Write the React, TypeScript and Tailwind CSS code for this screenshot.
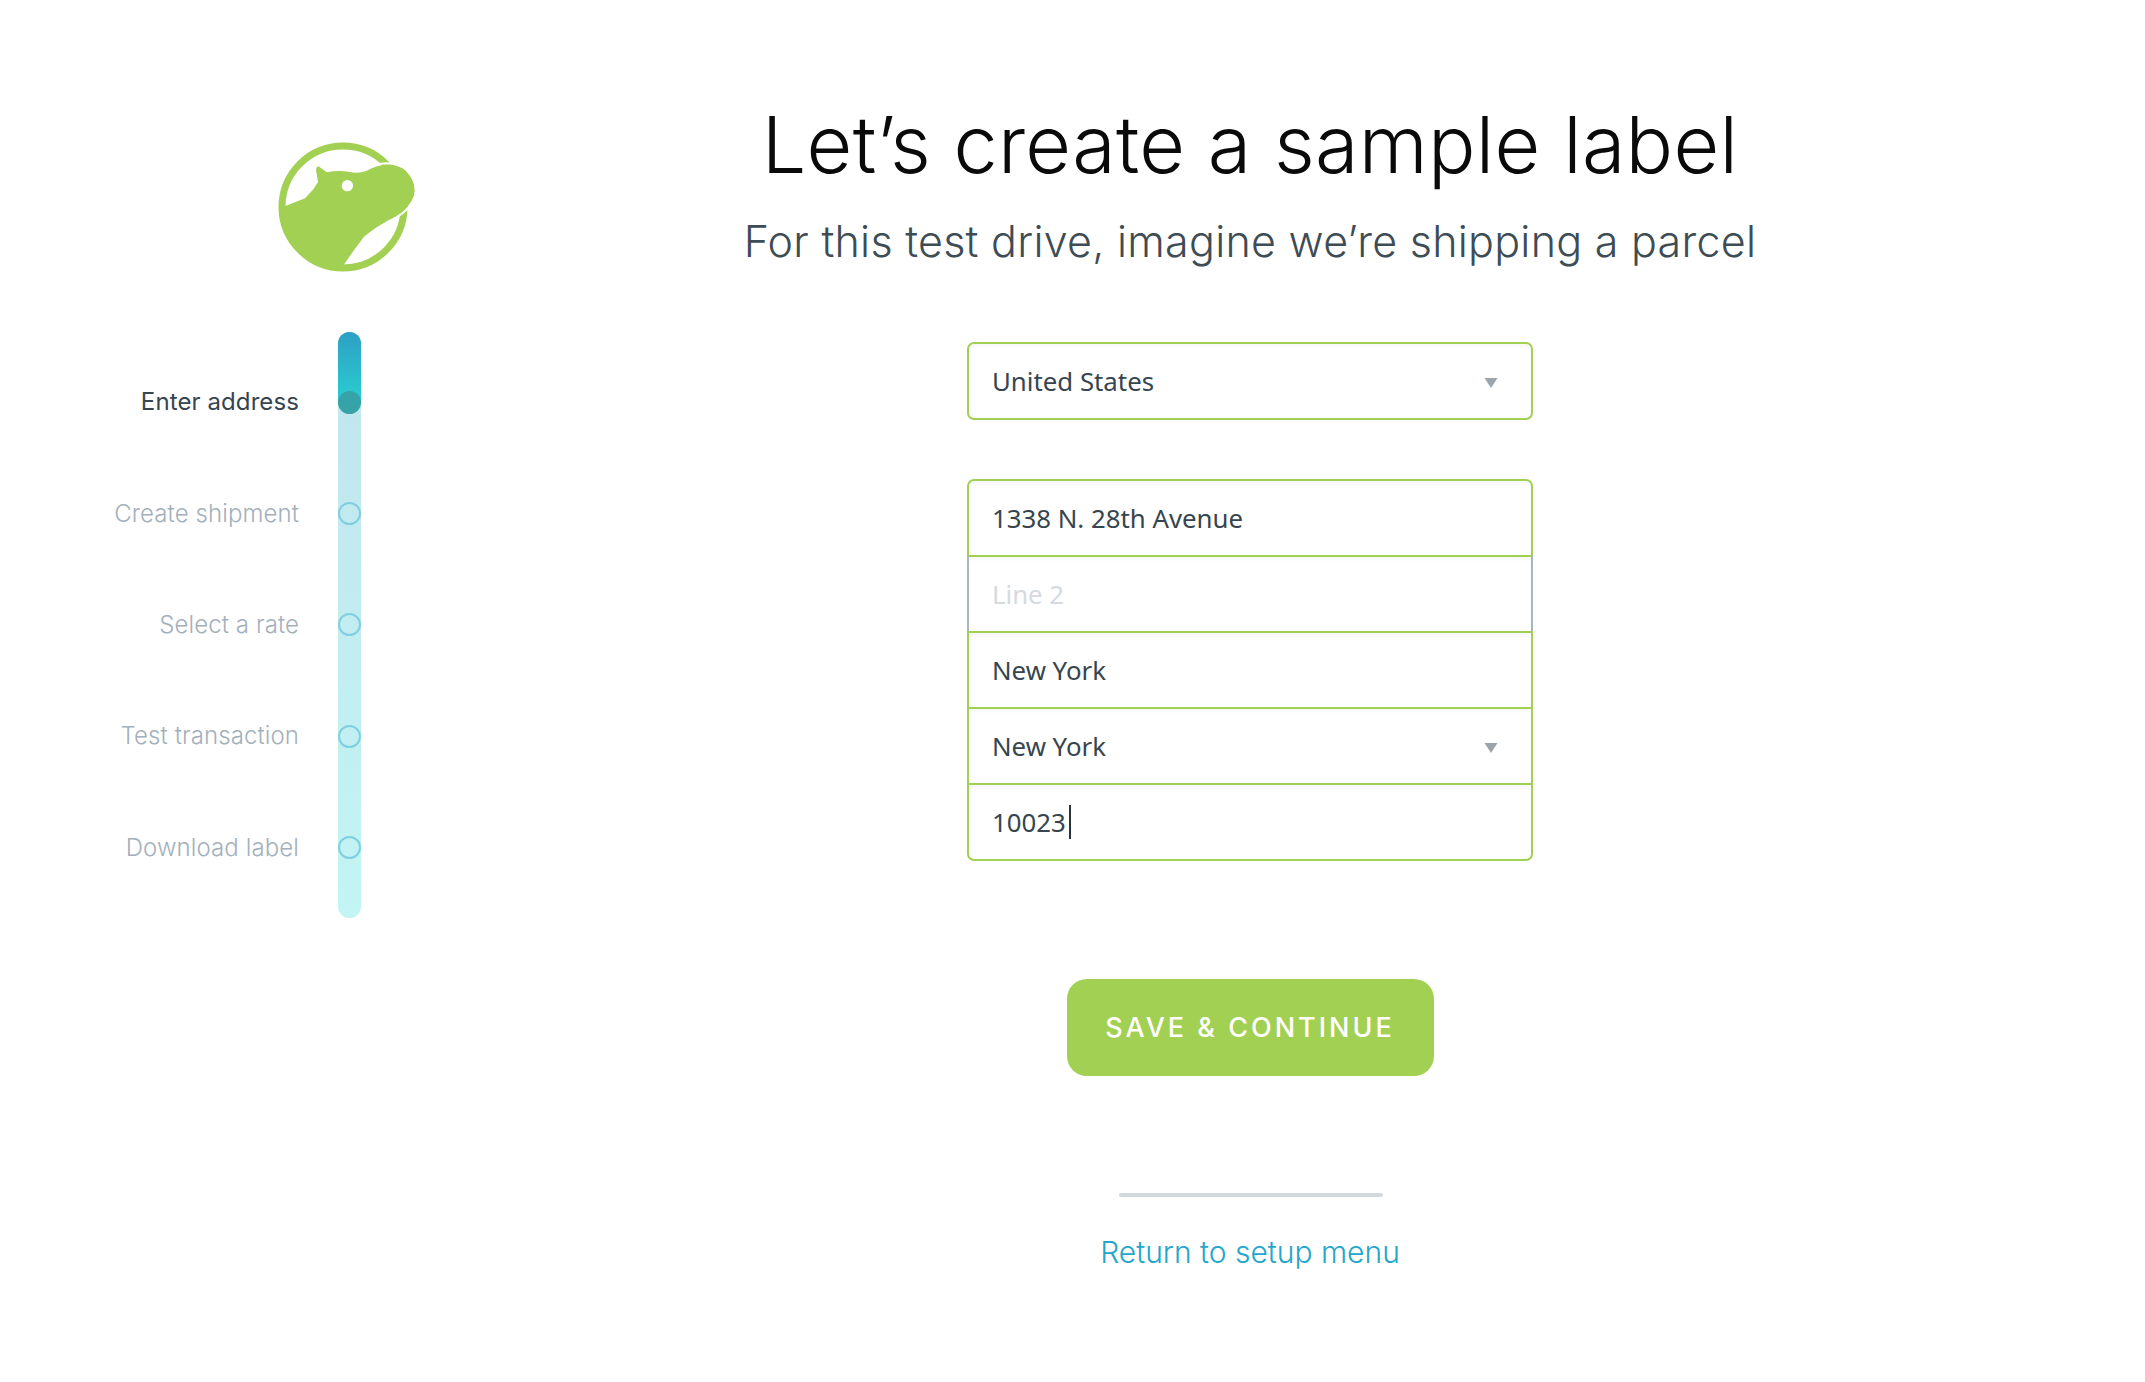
const green = "border-[#a2d053]";

function Logo() {
  return (
    <svg viewBox="0 0 540 510" width="180" height="170" className="block">
      <circle cx="249" cy="261" r="183" fill="none" stroke="#a2d053" strokeWidth="21" />
      <path
        fill="#a2d053"
        d="M78 257 L135 235 L160 208 L174 186 L168 150 Q170 138 178 140 L200 157 Q235 150 265 155 Q295 162 320 152 Q350 136 385 133 Q430 135 452 170 Q470 200 462 228 Q450 262 410 288 Q350 318 312 350 Q285 385 253 432 L240 446 A187 187 0 0 1 64 262 Z"
      />
      <path
        fill="none"
        stroke="#ffffff"
        strokeWidth="6"
        d="M352 133 Q368 130 385 130 Q432 132 455 168 Q473 200 465 229 Q453 264 412 291"
      />
      <circle cx="262" cy="197" r="17" fill="#ffffff" />
    </svg>
  );
}

function Step({ label, active }: { label: string; active?: boolean }) {
  return (
    <div className="flex h-[111.4px] items-center justify-end">
      <span
        className={
          "mr-[39px] font-['Inter'] text-[24px] leading-none tracking-[0.1px] " +
          (active ? "font-normal text-[#36454f]" : "font-light text-[#a3b0bb]")
        }
      >
        {label}
      </span>
      {active ? (
        <span className="h-[23px] w-[23px] rounded-full bg-[#35a3a8]" />
      ) : (
        <span className="h-[23px] w-[23px] rounded-full border-2 border-[#7fcfe0]" />
      )}
    </div>
  );
}

function Chevron() {
  return (
    <svg width="14" height="12" viewBox="0 0 14 12" className="mt-[3px] block">
      <path d="M0.5 1 H13.5 L7 11 Z" fill="#9aa5ae" />
    </svg>
  );
}

function Row({
  text,
  placeholder,
  caret,
  select,
  cls,
}: {
  text: string;
  placeholder?: boolean;
  caret?: boolean;
  select?: boolean;
  cls: string;
}) {
  return (
    <div
      className={
        "-mt-[2px] flex h-[78px] items-center justify-between border-2 bg-white pl-[23px] pr-[33px] font-['Noto_Sans'] text-[25.8px] shadow-[inset_0_3px_3px_rgba(0,0,0,0.03)] " +
        cls
      }
    >
      <span className={"flex items-center " + (placeholder ? "text-[#d5dae0]" : "text-[#36454f]")}>
        {text}
        {caret && <span className="ml-[3px] inline-block h-[34px] w-[2px] bg-[#28343c]" />}
      </span>
      {select && <Chevron />}
    </div>
  );
}

export default function App() {
  return (
    <div className="flex h-[1382px] w-[2145px] overflow-hidden bg-white font-['Lato',sans-serif]">
      <aside className="w-[450px] shrink-0">
        <div className="ml-[260px] mt-[120px]">
          <Logo />
        </div>
        <div className="relative mt-[42px] h-[586px] w-[361px] pt-[14.5px]">
          <div className="absolute left-[338px] top-0 h-[586px] w-[23px] rounded-full bg-gradient-to-b from-[#c1e4ee] to-[#c2f5f3]" />
          <div className="absolute left-[338px] top-0 h-[72px] w-[23px] rounded-t-full bg-gradient-to-b from-[#2da0c4] to-[#29d0d0]" />
          <div className="relative">
            <Step label="Enter address" active />
            <Step label="Create shipment" />
            <Step label="Select a rate" />
            <Step label="Test transaction" />
            <Step label="Download label" />
          </div>
        </div>
      </aside>
      <main className="flex w-[1600px] shrink-0 flex-col items-center">
        <h1 className="mt-[89px] h-[110px] font-['Inter'] text-[79px] font-light leading-[110px] tracking-[0.3px] text-[#0a0a0a]">
          Let’s create a sample label
        </h1>
        <p className="mt-[14px] h-[56px] font-['Inter'] text-[43px] font-light leading-[56px] tracking-[0.27px] text-[#3e4c56]">
          For this test drive, imagine we’re shipping a parcel
        </p>
        <div className="mt-[73px] w-[566px]">
          <Row text="United States" select cls={"mt-0 rounded-[7px] " + green} />
        </div>
        <div className="mt-[59px] w-[566px]">
          <Row text="1338 N. 28th Avenue" cls={"mt-0 rounded-t-[7px] " + green} />
          <Row
            text="Line 2"
            placeholder
            cls="border-x-[#aab4c2] border-y-[#a2d053]"
          />
          <Row text="New York" cls={green} />
          <Row text="New York" select cls={green} />
          <Row text="10023" caret cls={"rounded-b-[7px] " + green} />
        </div>
        <button className="mt-[118px] h-[97px] w-[367px] rounded-[20px] bg-[#a2d053] pt-[2px] font-['Inter'] text-[27px] font-medium tracking-[3px] text-white">
          SAVE &amp; CONTINUE
        </button>
        <div className="ml-[1px] mt-[117px] h-[4px] w-[264px] rounded-full bg-[#d3d8dc]" />
        <a className="mt-[37px] font-['Inter'] text-[30px] font-light leading-[36px] text-[#23a6cc]">
          Return to setup menu
        </a>
      </main>
    </div>
  );
}
